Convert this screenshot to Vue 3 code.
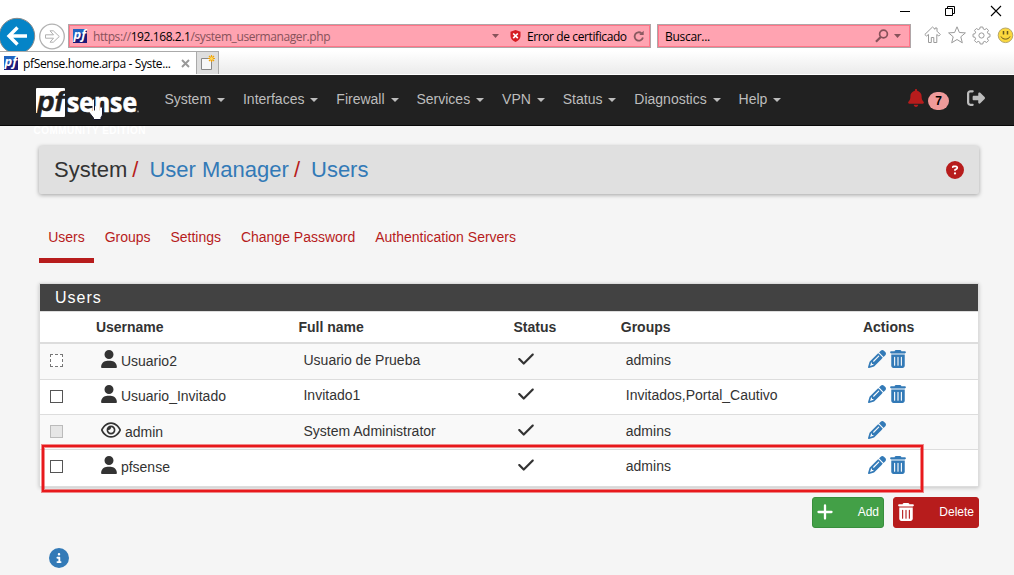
<script setup>
const menus = ['System', 'Interfaces', 'Firewall', 'Services', 'VPN', 'Status', 'Diagnostics', 'Help']
const tabs = ['Users', 'Groups', 'Settings', 'Change Password', 'Authentication Servers']
const users = [
  { name: 'Usuario2', full: 'Usuario de Prueba', groups: 'admins', box: 'focused' },
  { name: 'Usuario_Invitado', full: 'Invitado1', groups: 'Invitados,Portal_Cautivo', box: '' },
  { name: 'admin', full: 'System Administrator', groups: 'admins', box: 'disabled', system: true },
  { name: 'pfsense', full: '', groups: 'admins', box: '' },
]
const icons = {
  user: 'M224 256A128 128 0 1 0 224 0a128 128 0 1 0 0 256zm-45.7 48C79.8 304 0 383.8 0 482.3C0 498.7 13.3 512 29.7 512l388.6 0c16.4 0 29.7-13.3 29.7-29.7C448 383.8 368.2 304 269.7 304l-91.4 0z',
  eye: 'M288 80c-65.2 0-118.8 29.6-159.9 67.7C89.6 183.5 63 226 49.4 256c13.6 30 40.2 72.5 78.6 108.3C169.2 402.4 222.8 432 288 432s118.8-29.6 159.9-67.7C486.4 328.5 513 286 526.6 256c-13.6-30-40.2-72.5-78.6-108.3C406.8 109.6 353.2 80 288 80zM95.4 112.6C142.5 68.8 207.2 32 288 32s145.5 36.8 192.6 80.6c46.8 43.5 78.1 95.4 93 131.1c3.3 7.9 3.3 16.7 0 24.6c-14.9 35.7-46.2 87.7-93 131.1C433.5 443.2 368.8 480 288 480s-145.5-36.8-192.6-80.6C48.6 356 17.3 304 2.5 268.3c-3.3-7.9-3.3-16.7 0-24.6C17.3 208 48.6 156 95.4 112.6zM288 336c44.2 0 80-35.8 80-80s-35.8-80-80-80c-.7 0-1.3 0-2 0c1.3 5.1 2 10.5 2 16c0 35.3-28.7 64-64 64c-5.5 0-10.9-.7-16-2c0 .7 0 1.3 0 2c0 44.2 35.8 80 80 80zm0-208a128 128 0 1 1 0 256 128 128 0 1 1 0-256z',
  check: 'M438.6 105.4c12.5 12.5 12.5 32.8 0 45.3l-256 256c-12.5 12.5-32.8 12.5-45.3 0l-128-128c-12.5-12.5-12.5-32.8 0-45.3s32.8-12.5 45.3 0L160 338.7 393.4 105.4c12.5-12.5 32.8-12.5 45.3 0z',
  pencil: 'M410.3 231l11.3-11.3-33.9-33.9-62.1-62.1L291.7 89.8l-11.3 11.3-22.6 22.6L58.6 322.9c-10.4 10.4-18 23.3-22.2 37.4L1 480.7c-2.5 8.4-.2 17.5 6.1 23.7s15.3 8.5 23.7 6.1l120.3-35.4c14.1-4.2 27-11.8 37.4-22.2L387.7 253.7 410.3 231zM160 399.4l-9.1 22.7c-4 3.1-8.5 5.4-13.3 6.9L59.4 452l23-78.1c1.4-4.9 3.8-9.4 6.9-13.3l22.7-9.1v32c0 8.8 7.2 16 16 16h32zM362.7 18.7L348.3 33.2 325.7 55.8 314.3 67.1l33.9 33.9 62.1 62.1 33.9 33.9 11.3-11.3 22.6-22.6 14.5-14.5c25-25 25-65.5 0-90.5L453.3 18.7c-25-25-65.5-25-90.5 0zm-47.4 168l-144 144c-6.2 6.2-16.4 6.2-22.6 0s-6.2-16.4 0-22.6l144-144c6.2-6.2 16.4-6.2 22.6 0s6.2 16.4 0 22.6z',
  trash: 'M135.2 17.7C140.6 6.8 151.7 0 163.8 0H284.2c12.1 0 23.2 6.8 28.6 17.7L320 32h96c17.7 0 32 14.3 32 32s-14.3 32-32 32H32C14.3 96 0 81.7 0 64S14.3 32 32 32h96l7.2-14.3zM32 128H416V448c0 35.3-28.7 64-64 64H96c-35.3 0-64-28.7-64-64V128zm96 64c-8.8 0-16 7.2-16 16V432c0 8.8 7.2 16 16 16s16-7.2 16-16V208c0-8.8-7.2-16-16-16zm96 0c-8.8 0-16 7.2-16 16V432c0 8.8 7.2 16 16 16s16-7.2 16-16V208c0-8.8-7.2-16-16-16zm96 0c-8.8 0-16 7.2-16 16V432c0 8.8 7.2 16 16 16s16-7.2 16-16V208c0-8.8-7.2-16-16-16z',
  bell: 'M224 0c-17.7 0-32 14.3-32 32V51.2C119 66 64 130.6 64 208v18.8c0 47-17.3 92.4-48.5 127.6l-7.4 8.3c-8.4 9.4-10.4 22.9-5.3 34.4S19.4 416 32 416H416c12.6 0 24-7.4 29.2-18.9s3.1-25-5.3-34.4l-7.4-8.3C401.3 319.2 384 273.9 384 226.8V208c0-77.4-55-142-128-156.8V32c0-17.7-14.3-32-32-32zm45.3 493.3c12-12 18.7-28.3 18.7-45.3H160c0 17 6.7 33.3 18.7 45.3s28.3 18.7 45.3 18.7s33.3-6.7 45.3-18.7z',
  signout: 'M377.9 105.9L500.7 228.7c7.2 7.2 11.3 17.1 11.3 27.3s-4.1 20.1-11.3 27.3L377.9 406.1c-6.4 6.4-15 9.9-24 9.9c-18.7 0-33.9-15.2-33.9-33.9l0-62.1-128 0c-17.7 0-32-14.3-32-32l0-64c0-17.7 14.3-32 32-32l128 0 0-62.1c0-18.7 15.2-33.9 33.9-33.9c9 0 17.6 3.6 24 9.900zM160 96L96 96c-17.7 0-32 14.3-32 32l0 256c0 17.7 14.3 32 32 32l64 0c17.7 0 32 14.3 32 32s-14.3 32-32 32l-64 0c-53 0-96-43-96-96L0 128C0 75 43 32 96 32l64 0c17.7 0 32 14.3 32 32s-14.3 32-32 32z',
  question: 'M256 512A256 256 0 1 0 256 0a256 256 0 1 0 0 512zM169.8 165.3c7.9-22.3 29.1-37.3 52.8-37.3l58.3 0c34.9 0 63.1 28.3 63.1 63.1c0 22.6-12.1 43.5-31.7 54.8L280 264.4c-.2 13-10.9 23.6-24 23.6c-13.3 0-24-10.7-24-24l0-13.5c0-8.6 4.6-16.5 12.1-20.8l44.3-25.4c4.7-2.7 7.6-7.7 7.6-13.1c0-8.4-6.8-15.1-15.1-15.1l-58.3 0c-3.4 0-6.4 2.1-7.5 5.3l-.4 1.2c-4.4 12.5-18.2 19-30.6 14.6s-19-18.2-14.6-30.6l.4-1.2zM224 352a32 32 0 1 1 64 0 32 32 0 1 1 -64 0z',
  info: 'M256 512A256 256 0 1 0 256 0a256 256 0 1 0 0 512zM216 336l24 0 0-64-24 0c-13.3 0-24-10.7-24-24s10.7-24 24-24l48 0c13.3 0 24 10.7 24 24l0 88 8 0c13.3 0 24 10.7 24 24s-10.7 24-24 24l-80 0c-13.3 0-24-10.7-24-24s10.7-24 24-24zm40-208a32 32 0 1 1 0 64 32 32 0 1 1 0-64z',
}
</script>

<template>
  <div class="screen">
    <header class="browser">
      <div class="window-buttons">
        <svg width="12" height="12" viewBox="0 0 12 12"><path d="M2 6.500h10" stroke="#000" /></svg>
        <svg width="12" height="12" viewBox="0 0 12 12" fill="none" stroke="#000"><path d="M1.500 3.500h7v7h-7zM3.500 3.500v-2h7v7h-2" /></svg>
        <svg width="12" height="12" viewBox="0 0 12 12" stroke="#000" stroke-width="1.100"><path d="M1 1l10 10M11 1L1 11" /></svg>
      </div>

      <div class="toolbar">
        <svg class="nav-buttons" width="68" height="36" viewBox="0 0 68 36">
          <circle cx="17" cy="20" r="17.700" fill="#0584c7" stroke="#8a8a8a" stroke-width="1" />
          <path d="M27 20H10M17.500 11.500L9 20l8.500 8.500" fill="none" stroke="#fff" stroke-width="3.400" />
          <circle cx="52" cy="20.500" r="12.300" fill="#fff" stroke="#b2b2b2" stroke-width="1.300" />
          <path d="M45.500 18.800h8l-3.500-4h3.300l6 5.700-6 5.700h-3.300l3.500-4h-8z" fill="none" stroke="#b0b0b0" />
        </svg>
        <div class="field address">
          <svg class="favicon" width="14" height="14" viewBox="0 0 14 14">
            <rect width="14" height="14" fill="#1c1a78" /><path d="M0 0h14L0 11z" fill="#2064c0" />
            <text x="0.500" y="10" textLength="12.500" lengthAdjust="spacingAndGlyphs" class="pf">pf</text>
          </svg>
          <span class="url">https://<b>192.168.2.1</b>/system_usermanager.php</span>
          <svg class="drop" width="7" height="4" viewBox="0 0 7 4"><path d="M0 0h7L3.500 4z" fill="#87525a" /></svg>
          <svg class="shield" width="11" height="12" viewBox="0 0 11 12">
            <path d="M5.500 0L10.500 1.700V6c0 3-2.500 5-5 6-2.500-1-5-3-5-6V1.700z" fill="#d51d22" />
            <path d="M3.200 3.500l4.600 4.600M7.800 3.500L3.200 8.100" stroke="#fff" stroke-width="1.700" />
          </svg>
          <span class="cert">Error de certificado</span>
          <svg class="reload" width="12" height="13" viewBox="0 0 12 13">
            <path d="M8.500 3.200A4.200 4.200 0 1 0 9.900 7.500" fill="none" stroke="#8a5960" stroke-width="1.800" />
            <path d="M6.300 4.900h4.400V.8z" fill="#8a5960" />
          </svg>
        </div>
        <div class="field search">
          <span class="placeholder">Buscar...</span>
          <svg width="14" height="14" viewBox="0 0 14 14" fill="none" stroke="#87525a">
            <circle cx="8.500" cy="5" r="3.900" stroke-width="1.700" /><path d="M5.700 7.900L1 12.700" stroke-width="2.200" />
          </svg>
          <svg class="search-drop" width="7" height="4" viewBox="0 0 7 4"><path d="M0 0h7L3.500 4z" fill="#87525a" /></svg>
        </div>
        <svg class="tools" width="91" height="20" viewBox="0 0 91 20" fill="#fff" stroke="#9a9a9a">
          <path d="M4.500 9.500L2.500 11 .8 9.500 8.500 2l2.500 2.300V3h2v3.200l3.300 3.300-1.500 1.500-2-1.500v8h-3v-5h-2.500v5H4.500z" />
          <path d="M33 1.800l2.400 5.700 6 .4-4.600 3.900 1.500 6-5.300-3.300-5.300 3.300 1.500-6-4.600-3.900 6-.4z" />
          <path d="M56.200 2h2.600l.5 2 1.500.6 1.800-1.100 1.900 1.900-1.100 1.800.6 1.500 2 .5v2.600l-2 .5-.6 1.500 1.100 1.800-1.900 1.900-1.800-1.100-1.500.6-.5 2h-2.600l-.5-2-1.500-.6-1.800 1.100-1.900-1.900 1.100-1.800-.6-1.500-2-.5V9.200l2-.5.6-1.500-1.100-1.800 1.900-1.900 1.800 1.100 1.500-.6z" />
          <circle cx="57.500" cy="10.500" r="2.600" />
          <circle cx="81.500" cy="10.300" r="7.300" fill="#fbd83d" stroke="#b5a66c" />
          <path d="M79.500 6v3.500M83.500 6v3.500" stroke="#66571e" stroke-width="1.500" />
          <path d="M77 11.500c1.500 3.500 7.500 3.500 9 0" fill="none" stroke="#66571e" />
        </svg>
      </div>

      <div class="browser-tabs">
        <div class="browser-tab">
          <svg class="favicon" width="14" height="14" viewBox="0 0 14 14">
            <rect width="14" height="14" fill="#1c1a78" /><path d="M0 0h14L0 11z" fill="#2064c0" />
            <text x="0.500" y="10" textLength="12.500" lengthAdjust="spacingAndGlyphs" class="pf">pf</text>
          </svg>
          <span class="tab-title">pfSense.home.arpa - Syste...</span>
          <svg width="9" height="9" viewBox="0 0 9 9"><path d="M1 1l7 7M8 1L1 8" stroke="#999" stroke-width="1.900" /></svg>
        </div>
        <div class="new-tab">
          <svg width="16" height="16" viewBox="0 0 16 16">
            <path d="M1.500 3.500h10v11h-10z" fill="#f7f7f7" stroke="#888" />
            <path d="M11.500 0v7M8 3.500h7M9 1l5 5M14 1L9 6" stroke="#f0a30a" stroke-width="1.200" />
            <circle cx="11.500" cy="3.500" r="1.500" fill="#ffd95c" />
          </svg>
        </div>
      </div>
    </header>

    <nav class="navbar">
      <div class="brand">
        <svg width="114" height="56" viewBox="0 0 114 56">
          <path d="M4 1h27q1 0 1 1v27q0 1-1 1H7l-1-4H3V2q0-1 1-1z" fill="#fff" />
          <text x="4" y="23.500" textLength="27" lengthAdjust="spacingAndGlyphs" class="logo-pf">pf</text>
          <text x="34" y="24.500" textLength="70" lengthAdjust="spacingAndGlyphs" class="logo-sense">sense</text>
          <circle cx="105" cy="24.500" r="1" fill="#888" />
          <text x="0.500" y="46.500" textLength="112" class="edition">COMMUNITY EDITION</text>
        </svg>
      </div>
      <a v-for="m in menus" :key="m" class="menu">{{ m }}<i class="caret"></i></a>
      <div class="nav-right">
        <svg class="bell" viewBox="0 0 448 512"><path :d="icons.bell" /></svg>
        <span class="badge">7</span>
        <svg class="signout" viewBox="0 0 512 512"><path :d="icons.signout" /></svg>
      </div>
    </nav>

    <main>
      <div class="crumbs">
        <span>System</span><em>/</em><a>User Manager</a><em>/</em><a>Users</a>
        <svg class="help" viewBox="0 0 512 512"><circle cx="256" cy="256" r="200" fill="#fff" /><path :d="icons.question" fill="#b71c1c" /></svg>
      </div>

      <div class="tabs">
        <a v-for="(t, i) in tabs" :key="t" :class="{ active: i === 0 }">{{ t }}</a>
      </div>

      <section class="panel">
        <h2>Users</h2>
        <div class="row head">
          <span></span><span>Username</span><span>Full name</span><span>Status</span><span>Groups</span><span>Actions</span>
        </div>
        <div v-for="u in users" :key="u.name" class="row">
          <span class="pick"><i class="box" :class="u.box"></i></span>
          <span class="name">
            <svg v-if="u.system" class="eye" viewBox="0 0 576 512"><path :d="icons.eye" /></svg>
            <svg v-else class="i16" viewBox="0 0 448 512"><path :d="icons.user" /></svg>
            <span>{{ u.name }}</span>
          </span>
          <span>{{ u.full }}</span>
          <span><svg class="i16" viewBox="0 0 448 512"><path :d="icons.check" /></svg></span>
          <span>{{ u.groups }}</span>
          <span class="actions">
            <svg class="i18" viewBox="0 0 512 512"><path :d="icons.pencil" /></svg>
            <svg v-if="!u.system" class="i16" viewBox="0 0 448 512"><path :d="icons.trash" /></svg>
          </span>
        </div>
      </section>

      <div class="buttons">
        <a class="btn add">
          <svg width="16" height="16" viewBox="0 0 16 16"><path d="M8 1.500v13M1.500 8h13" stroke="#fff" stroke-width="2.300" stroke-linecap="round" /></svg>
          <span>Add</span>
        </a>
        <a class="btn delete">
          <svg class="i16" viewBox="0 0 448 512"><path :d="icons.trash" /></svg>
          <span>Delete</span>
        </a>
      </div>
      <svg class="info" viewBox="0 0 512 512"><circle cx="256" cy="256" r="200" fill="#fff" /><path :d="icons.info" fill="#337ab7" /></svg>
    </main>

    <div class="highlight"></div>
    <svg class="pointer" width="17" height="23" viewBox="0 0 17 23">
      <path d="M5 1.500q1.500-1.200 2.500.3V8q1.500-1 2.500.5 1.500-1 2.500.5 2-.7 3 1V16q0 2-1.500 3.500V21.500h-7.500V20L1 13q-.5-2 1.500-2L5 13z" fill="#fff" stroke="#15152a" stroke-width="1" />
      <path d="M7.500 8v4.500M10 8.500v4M12.500 9v3.500" stroke="#15152a" />
    </svg>
  </div>
</template>

<style>
body { background: #f5f5f5; overflow: hidden; }
</style>

<style scoped>
* { box-sizing: border-box; }
svg { display: block; flex: none; overflow: visible; }
.screen {
  position: relative;
  width: 1014px;
  height: 575px;
  overflow: hidden;
  background: #f5f5f5;
  font: 14px/20px "Liberation Sans", Arial, sans-serif;
  color: #333;
}
.browser {
  height: 75px;
  background: #fff;
  font: 12px/16px "Open Sans", "Noto Sans", sans-serif;
  color: #000;
}
.window-buttons { display: flex; justify-content: flex-end; gap: 34px; height: 16px; padding: 5px 12px 0 0; }
.toolbar { display: flex; height: 35px; overflow: hidden; }
.field {
  display: flex;
  flex: none;
  align-items: center;
  height: 24px;
  margin-top: 8px;
  border: 1px solid #b0a6a8;
  background: #ffa3b1;
  box-shadow: inset 0 0 0 1px #ff7588;
}
.field > span { flex: none; padding-top: 2px; }
.address { width: 583px; padding-left: 4px; }
.pf { font: italic bold 12px "Open Sans", sans-serif; fill: #fff; }
.url { margin-left: 6px; width: 399px; color: #87525a; white-space: nowrap; letter-spacing: -0.410px; }
.url b { font-weight: 400; color: #000; }
.shield { margin-left: 11px; }
.cert { margin-left: 6px; width: 106px; white-space: nowrap; letter-spacing: -0.400px; }
.search { width: 254px; margin-left: 6px; padding-left: 7px; }
.placeholder { width: 210px; letter-spacing: -0.300px; }
.search-drop { margin-left: 5px; }
.tools { margin: 9px 0 0 12.500px; }
.browser-tabs {
  display: flex;
  height: 24px;
  border-bottom: 1px solid #fff;
  background: linear-gradient(#fff, #ebebeb);
}
.browser-tab {
  display: flex;
  align-items: center;
  width: 197px;
  padding-left: 4px;
  border-top: 1px solid #aaa;
  border-right: 1px solid #aaa;
  background: #fff;
}
.tab-title { width: 153px; margin: 2px 5px 0 5px; white-space: nowrap; letter-spacing: -0.360px; }
.new-tab { width: 22px; padding: 3px 0 0 3px; background: #dedede; border: solid #aaa; border-width: 1px 1px 0 0; }

.navbar { display: flex; height: 51px; background: #212121; border-bottom: 1px solid #080808; }
.brand { width: 131px; height: 51px; padding: 12px 0 0 33px; margin-right: 33.400px; }
.logo-pf { font: italic bold 27px "Liberation Sans", sans-serif; fill: #212121; stroke: #212121; stroke-width: 0.500px; }
.logo-sense { font: bold 27px "Open Sans", sans-serif; fill: #fff; stroke: #fff; stroke-width: 0.700px; }
.edition { font: bold 10px "Liberation Sans", sans-serif; fill: #fff; }
.brand svg { position: relative; z-index: 1; }
.menu { margin-right: 17.900px; padding-top: 14px; color: #bdbdbd; white-space: nowrap; }
.caret { display: inline-block; margin-left: 6px; vertical-align: middle; border: 4px solid transparent; border-top-color: #bdbdbd; border-bottom: 0; }
.nav-right { display: flex; align-items: flex-start; margin-left: auto; padding: 14px 29px 0 0; }
.bell { width: 16px; height: 18px; fill: #b71c1c; }
.badge {
  width: 21px;
  height: 18px;
  margin: 3px 18px 0 4px;
  border-radius: 9px;
  background: #ef9a9a;
  color: #000;
  font: bold 12px/18px "Liberation Sans", sans-serif;
  text-align: center;
}
.signout { width: 18px; height: 18px; fill: #bdbdbd; }

main { padding: 20px 35px 0 39px; }
.crumbs {
  display: flex;
  align-items: center;
  height: 48px;
  padding: 0 15px;
  border-radius: 2px;
  background: #e0e0e0;
  box-shadow: 0 1px 4px rgba(0, 0, 0, 0.35);
  font-size: 22px;
  color: #333;
}
.crumbs em { margin: 0 11px 0 5px; font-style: normal; color: #b71c1c; }
.crumbs a { color: #337ab7; }
.help { width: 18px; height: 18px; margin-left: auto; }
.tabs { display: flex; height: 69px; gap: 1.500px; margin-bottom: 20px; color: #b71c1c; }
.tabs a { padding: 33px 9.200px 0; }
.tabs .active { border-bottom: 5px solid #b71c1c; }

.panel { width: 940px; border: 1px solid #ddd; background: #fff; box-shadow: 0 1px 4px rgba(0, 0, 0, 0.2); }
h2 {
  height: 28px;
  margin: 0;
  padding: 0 15px;
  border-bottom: 1px solid #ddd;
  background: #424242;
  color: #fff;
  font: 16px/27px "Liberation Sans", sans-serif;
  letter-spacing: 1px;
}
.row {
  display: grid;
  grid-template-columns: 50.900px 202.600px 215px 107.300px 242.200px 1fr;
  height: 35px;
  padding-top: 5px;
  border-top: 1px solid #ddd;
}
.row > span { padding-left: 10px; }
.row.head { height: 32px; border-top: 0; border-bottom: 2px solid #ddd; font-weight: bold; }
.row.head > span { padding-left: 5px; }
.row.head + .row { border-top: 0; padding-top: 6px; }
.row:nth-child(odd) { background: #f9f9f9; }
.row:nth-child(5), .row:nth-child(6) { padding-top: 6px; }
.row:nth-child(6) { height: 37px; }
.i16 { width: 16px; height: 18px; fill: currentColor; }
.i18 { width: 18px; height: 18px; fill: currentColor; }
.eye { width: 20px; height: 18px; fill: currentColor; }
.name { display: flex; gap: 4px; }
.name > span { padding-top: 1px; }
.actions { display: flex; gap: 4px; color: #337ab7; }
.box { display: block; width: 13px; height: 13px; margin-top: 5px; border: 1px solid #555; background: #fff; }
.row.head + .row .box, .row:nth-child(5) .box, .row:nth-child(6) .box { margin-top: 4px; }
.box.focused { border: 1px dashed #777; }
.box.disabled { border-color: #bbb; background: #e6e6e6; }

.buttons { display: flex; justify-content: flex-end; gap: 9px; margin-top: 10px; }
.btn {
  display: flex;
  align-items: center;
  justify-content: space-between;
  height: 31px;
  padding: 0 4px 1px;
  border: 1px solid #388e3c;
  border-radius: 3px;
  background: #43a047;
  color: #fff;
  font-size: 12px;
}
.btn span { padding-bottom: 1px; }
.add { width: 72px; }
.delete { width: 86px; border-color: #b71c1c; background: #b71c1c; }
.info { width: 20px; height: 20px; margin: 19.500px 0 0 10px; }

.highlight {
  position: absolute;
  left: 42px;
  top: 445px;
  width: 881px;
  height: 47px;
  border: 2px solid #e8191c;
  box-shadow: 0 0 0 1px rgba(232, 25, 28, 0.5), inset 0 0 0 1px rgba(232, 25, 28, 0.5);
}
.pointer { position: absolute; left: 87px; top: 98px; }
</style>
